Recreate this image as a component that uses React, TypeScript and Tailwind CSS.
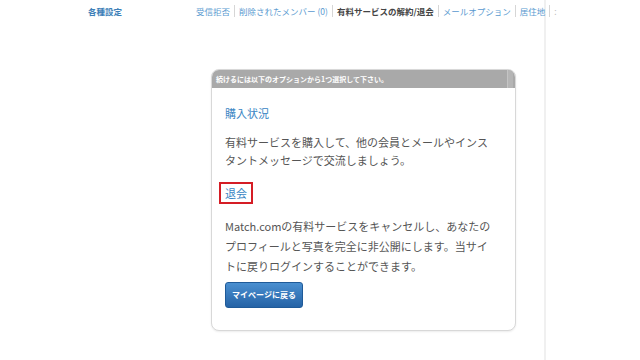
import React from 'react';

const FONT = '"Noto Sans CJK JP", "Noto Sans", sans-serif';

const NAV = [
  { label: '受信拒否', active: false },
  { label: '削除されたメンバー (0)', active: false },
  { label: '有料サービスの解約/退会', active: true },
  { label: 'メールオプション', active: false },
  { label: '居住地', active: false },
];

const Sep = () => <span className="mx-[4px] inline-block h-[12px] w-px shrink-0 bg-[#d6d6d6]" />;

export default function App() {
  return (
    <div className="h-[360px] w-[640px] overflow-hidden bg-white" style={{ fontFamily: FONT }}>
      <div className="relative h-full w-[546px] border-r-2 border-[#f0f0f0]">
        {/* top nav */}
        <div className="flex h-[22px] items-center whitespace-nowrap text-[8.5px]">
          <span className="ml-[88px] w-[108px] shrink-0 font-bold text-[#3d7fb8]">各種設定</span>
          {NAV.map((n, i) => (
            <React.Fragment key={n.label}>
              {i > 0 && <Sep />}
              <span className={'shrink-0 ' + (n.active ? 'font-bold text-[#444]' : 'text-[#5a9ad0]')}>{n.label}</span>
            </React.Fragment>
          ))}
          <Sep />
          <span className="shrink-0 text-[#bbb]">:</span>
        </div>

        {/* card */}
        <div className="ml-[211px] mt-[47px] h-[262px] w-[305px] overflow-hidden rounded-[8px] border-[1.5px] border-[#d8d8d8] bg-white shadow-[0_1px_2px_rgba(0,0,0,0.08)]">
          <div className="flex h-[18px] items-center bg-[#a9a9a9] pl-[4px] pr-[2px]">
            <span className="flex-1 text-[7px] font-bold text-white">続けるには以下のオプションから1つ選択して下さい。</span>
            <span className="h-full w-[6px] border-l border-[#c4c4c4] bg-[#b5b5b5]" />
          </div>
          <div className="pl-[13px] pr-[21px] pt-[17px]">
            <div className="text-[11px] leading-[16px] text-[#3a86c4]">購入状況</div>
            <p className="mt-[12px] text-[11px] leading-[18px] text-[#555]">
              有料サービスを購入して、他の会員とメールやインスタントメッセージで交流しましょう。
            </p>
            <div className="-ml-[6px] mt-[13px] inline-block border-2 border-[#d51d25] px-[4px] py-[1px] text-[11px] leading-[16px] text-[#3a86c4]">
              退会
            </div>
            <p className="mt-[12px] text-[11px] leading-[20px] text-[#555]">
              Match.comの有料サービスをキャンセルし、あなたのプロフィールと写真を完全に非公開にします。当サイトに戻りログインすることができます。
            </p>
            <button className="mt-[6px] h-[26px] w-[78px] rounded-[3px] border border-[#1f5a98] bg-gradient-to-b from-[#4a8fd0] to-[#2563a6] text-[8px] font-bold text-white">
              マイページに戻る
            </button>
          </div>
        </div>
      </div>
    </div>
  );
}
